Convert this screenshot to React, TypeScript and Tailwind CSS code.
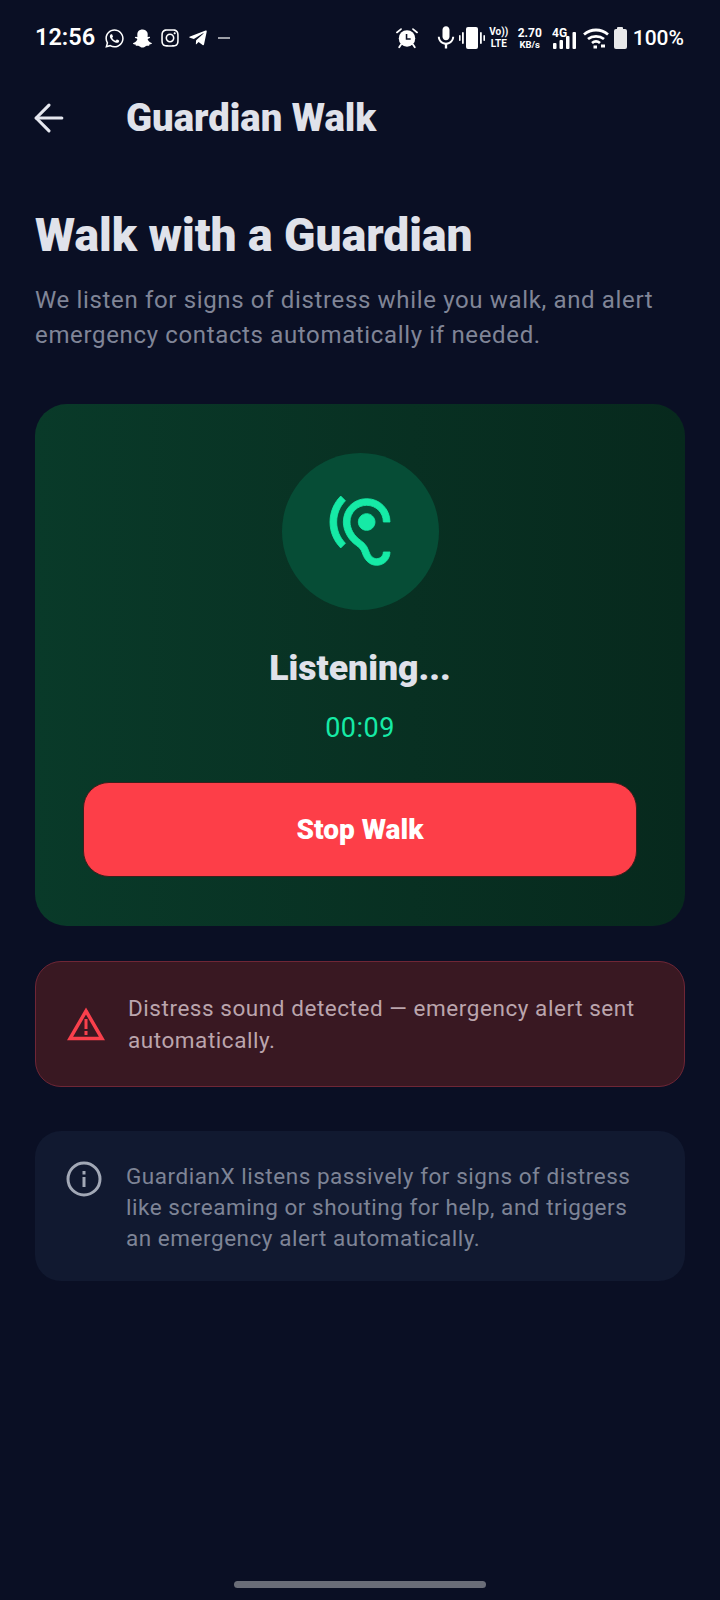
import { ArrowLeft } from 'lucide-react';
import { FaWhatsapp, FaSnapchatGhost, FaInstagram, FaTelegramPlane } from 'react-icons/fa';
import { MdMic } from 'react-icons/md';

const StatusBar = () => (
  <div className="flex h-[74px] items-center justify-between pl-[35px] pr-[36px] pt-[2px] text-white">
    <div className="flex items-center">
      <span className="text-[23.5px] font-semibold leading-none">12:56</span>
      <div className="ml-[9px] flex items-center gap-[8px]">
        <FaWhatsapp className="h-[21px] w-[21px]" />
        <FaSnapchatGhost className="h-[19px] w-[19px]" />
        <FaInstagram className="h-[20px] w-[20px]" />
        <FaTelegramPlane className="h-[20px] w-[20px]" />
        <div className="ml-[2px] h-[2px] w-[12px] bg-white/60" />
      </div>
    </div>
    <div className="flex items-center">
      <svg viewBox="0 0 24 22" className="h-[22px] w-[22px]" fill="white">
        <path d="M5.500 1.200 L1 5" stroke="white" strokeWidth="1.800" strokeLinecap="round" />
        <path d="M18.500 1.200 L23 5" stroke="white" strokeWidth="1.800" strokeLinecap="round" />
        <circle cx="12" cy="11.500" r="9" />
        <path d="M5.500 18 L3.500 21M18.500 18 L20.500 21" stroke="white" strokeWidth="2" strokeLinecap="round" />
        <path d="M11.500 6.500 V12 H16" fill="none" stroke="#0a0f24" strokeWidth="1.700" />
      </svg>
      <MdMic className="ml-[14px] h-[28px] w-[28px]" />
      <svg viewBox="0 0 26 22" className="ml-[-1px] h-[22px] w-[26px]" fill="white">
        <rect x="0" y="8" width="1.600" height="6" rx="0.800" />
        <rect x="3" y="5" width="1.800" height="12" rx="0.900" />
        <rect x="7" y="0" width="12" height="22" rx="2" />
        <rect x="21" y="5" width="1.800" height="12" rx="0.900" />
        <rect x="24.400" y="8" width="1.600" height="6" rx="0.800" />
      </svg>
      <div className="ml-[5px] flex w-[18px] flex-col items-center text-[10px] font-bold leading-[12px]">
        <span>Vo))</span>
        <span>LTE</span>
      </div>
      <div className="ml-[10px] flex w-[24px] flex-col items-center font-bold leading-none">
        <span className="text-[12px] leading-[12px]">2.70</span>
        <span className="text-[9.500px] leading-[11px]">KB/s</span>
      </div>
      <svg viewBox="0 0 25 22" className="ml-[10px] h-[22px] w-[25px]" fill="white">
        <text x="0" y="9.500" fontSize="12" fontWeight="700" fontFamily="Roboto, sans-serif">4G</text>
        <rect x="1" y="16" width="3.500" height="6" rx="1" />
        <rect x="7.500" y="13" width="3.500" height="9" rx="1" />
        <rect x="14" y="9" width="3.500" height="13" rx="1" />
        <rect x="20.500" y="5" width="3.500" height="17" rx="1" />
      </svg>
      <svg viewBox="0 0 26 22" className="ml-[6px] h-[22px] w-[26px]" fill="none" stroke="white" strokeWidth="2.800">
        <path d="M1 7.500c7-6 17-6 24 0" />
        <path d="M5 12c4.500-3.500 11.500-3.500 16 0" />
        <path d="M9 16c2.500-2 5.500-2 8 0" />
        <path d="M10.500 20h3.500M18 19h4" />
      </svg>
      <div className="ml-[5px] flex flex-col items-center">
        <div className="h-[2px] w-[6px] rounded-t-[1px] bg-[#e8e8ea]" />
        <div className="h-[20px] w-[13px] rounded-[2px] bg-[#e8e8ea]" />
      </div>
      <span className="ml-[6px] text-[21px] font-medium leading-none">100%</span>
    </div>
  </div>
);

const App = () => {
  return (
    <div className="h-[1600px] w-[720px] overflow-hidden bg-[#0a0f24] font-['Roboto',sans-serif]">
      <StatusBar />

      <div className="flex h-[88px] items-center pl-[35px]">
        <ArrowLeft className="-ml-[8px] h-[44px] w-[44px] text-[#e5e7ef]" strokeWidth={1.700} />
        <h1 className="ml-[55px] text-[38.300px] font-black leading-none text-[#e0e2ea]">Guardian Walk</h1>
      </div>

      <div className="px-[35px] pt-[47px]">
        <h2 className="text-[46.200px] font-black leading-[52px] text-[#e0e2ea]">Walk with a Guardian</h2>
        <p className="mt-[22px] text-[24px] leading-[35px] tracking-[0.650px] text-[#808597]">
          We listen for signs of distress while you walk, and alert emergency contacts automatically if needed.
        </p>

        <div className="mt-[51px] flex h-[522px] flex-col items-center rounded-[32px] bg-gradient-to-r from-[#093a29] to-[#07291d] px-[48px] pt-[49px]">
          <div className="flex h-[157px] w-[157px] items-center justify-center rounded-full bg-[#064d36]">
            <svg viewBox="0 0 24 24" className="h-[80px] w-[80px]" fill="#16eaa6" stroke="#16eaa6" strokeWidth="0.250">
              <path d="M17 20c-.29 0-.56-.06-.76-.15-.71-.37-1.210-.88-1.710-2.380-.51-1.560-1.470-2.290-2.390-3-.79-.61-1.610-1.240-2.320-2.530C9.290 10.980 9 9.930 9 9c0-2.800 2.200-5 5-5s5 2.200 5 5h2c0-3.930-3.070-7-7-7S7 5.070 7 9c0 1.260.38 2.650 1.070 3.900.91 1.650 1.980 2.480 2.850 3.150.81.62 1.390 1.070 1.710 2.050.6 1.820 1.370 2.840 2.730 3.550.51.23 1.070.35 1.640.35 2.210 0 4-1.790 4-4h-2c0 1.100-.9 2-2 2zM7.640 2.640L6.220 1.220C4.230 3.210 3 5.960 3 9s1.230 5.790 3.220 7.780l1.410-1.410C6.010 13.740 5 11.490 5 9s1.010-4.740 2.640-6.360zM11.500 9c0 1.380 1.120 2.500 2.500 2.500s2.500-1.120 2.500-2.500-1.120-2.500-2.500-2.500-2.500 1.120-2.500 2.500z" />
            </svg>
          </div>
          <div className="mt-[38px] text-[35.600px] font-black leading-[40px] text-[#e0e2ea]">Listening...</div>
          <div className="mt-[25px] text-[27px] leading-[30px] tracking-[0.500px] text-[#16eaa6]">00:09</div>
          <button className="mt-[39px] h-[95px] w-full rounded-[26px] border-[1.500px] border-[#3d1f1c] bg-[#fd3e48] text-[28px] font-black text-white">
            Stop Walk
          </button>
        </div>

        <div className="mt-[35px] flex h-[126px] items-center rounded-[26px] border-[1.500px] border-[#6f2636] bg-[#391822] pl-[31px] pr-[24px]">
          <svg viewBox="0 0 38 34" className="h-[34px] w-[38px] shrink-0" fill="none" stroke="#f9404c" strokeWidth="3.500" strokeLinejoin="miter">
            <path d="M19 4 L35 31.500 H3 Z" />
            <path d="M19 12v10M19 24v4" strokeWidth="3" />
          </svg>
          <p className="ml-[23px] text-[22.500px] leading-[32.500px] tracking-[0.550px] text-[#bba5ad]">
            Distress sound detected — emergency alert sent automatically.
          </p>
        </div>

        <div className="mt-[44px] flex h-[150px] items-start rounded-[26px] bg-[#111930] pl-[31px] pr-[40px] pt-[30px]">
          <svg viewBox="0 0 36 36" className="h-[36px] w-[36px] shrink-0" fill="none" stroke="#a2a8b6" strokeWidth="3">
            <circle cx="18" cy="18" r="16" />
            <path d="M18 16v10M18 10v3.500" />
          </svg>
          <p className="ml-[24px] text-[22.500px] leading-[31px] tracking-[0.530px] text-[#7e8496]">
            GuardianX listens passively for signs of distress like screaming or shouting for help, and triggers an emergency alert automatically.
          </p>
        </div>
      </div>

      <div className="mt-[300px] flex justify-center">
        <div className="h-[7px] w-[252px] rounded-full bg-[#6a6d78]" />
      </div>
    </div>
  );
};

export default App;
